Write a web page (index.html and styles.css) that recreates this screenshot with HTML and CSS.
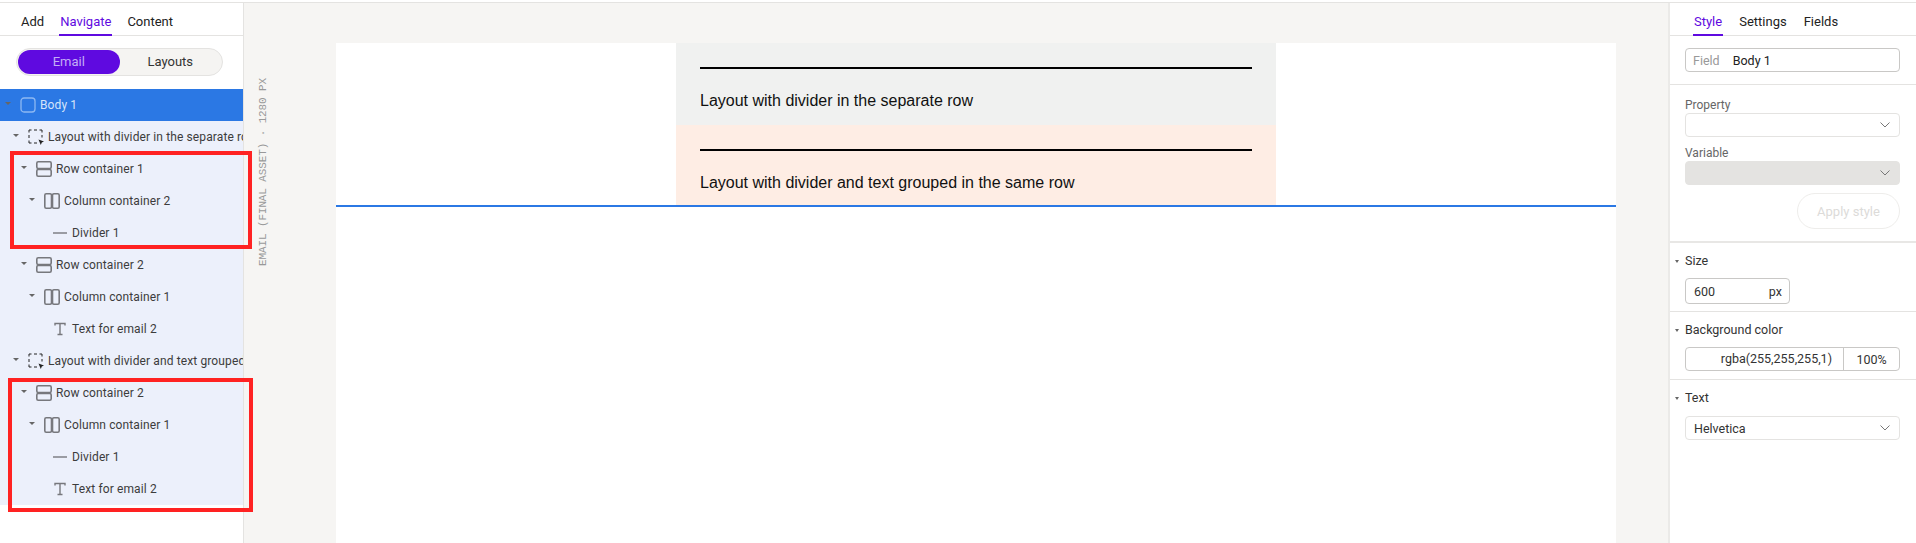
FILE: index.html
```html
<!DOCTYPE html>
<html>
<head>
    <link rel="stylesheet" href="styles.css">
</head>
<body>
    <svg class="defs">
        <symbol id="i-body" viewBox="0 0 16 16"><rect x="1" y="1" width="14" height="14" rx="3" fill="none" stroke="currentColor" stroke-width="1.3"/></symbol>
        <symbol id="i-layout" viewBox="0 0 16 16"><path d="M1 3.5V1h2.5M6 1h3M11.5 1H14v2.5M14 6v2.5M1 6v3M1 11.5V14h2.5M6 14h3" fill="none" stroke="currentColor" stroke-width="1"/><path d="M10.5 10.5l5.5 2-2.2 1-1 2.5z" fill="currentColor"/></symbol>
        <symbol id="i-row" viewBox="0 0 16 16"><rect x=".8" y=".8" width="14.4" height="6.7" rx="1.4" fill="none" stroke="currentColor" stroke-width="1.6"/><rect x=".8" y="8.5" width="14.4" height="6.7" rx="1.4" fill="none" stroke="currentColor" stroke-width="1.6"/></symbol>
        <symbol id="i-col" viewBox="0 0 16 16"><rect x=".8" y=".8" width="6.7" height="14.4" rx="1.4" fill="none" stroke="currentColor" stroke-width="1.6"/><rect x="8.5" y=".8" width="6.7" height="14.4" rx="1.4" fill="none" stroke="currentColor" stroke-width="1.6"/></symbol>
        <symbol id="i-divider" viewBox="0 0 16 16"><path d="M1 8h14" fill="none" stroke="currentColor" stroke-width="1.4"/></symbol>
        <symbol id="i-text" viewBox="0 0 16 16"><path d="M3 4.5V2.5h10v2M8 2.5v11M5.5 13.5h5" fill="none" stroke="currentColor" stroke-width="1.4"/></symbol>
        <symbol id="i-chevron" viewBox="0 0 10 6"><path d="M.5 .5L5 5l4.5-4.5" fill="none" stroke="currentColor" stroke-width="1"/></symbol>
    </svg>

    <div class="app">
        <div class="left-panel">
            <div class="tabs left-tabs">
                <span class="tab">Add</span>
                <span class="tab active">Navigate</span>
                <span class="tab">Content</span>
            </div>
            <div class="toggle-wrap">
                <div class="toggle">
                    <span class="toggle-item on">Email</span>
                    <span class="toggle-item">Layouts</span>
                </div>
            </div>
            <div class="tree">
                <div class="node selected depth-0"><i class="caret"></i><svg class="icon"><use href="#i-body"/></svg><span>Body 1</span></div>
                <div class="node depth-1"><i class="caret"></i><svg class="icon dark"><use href="#i-layout"/></svg><span>Layout with divider in the separate row</span></div>
                <div class="node depth-2"><i class="caret"></i><svg class="icon"><use href="#i-row"/></svg><span>Row container 1</span></div>
                <div class="node depth-3"><i class="caret"></i><svg class="icon"><use href="#i-col"/></svg><span>Column container 2</span></div>
                <div class="node depth-4"><i class="caret none"></i><svg class="icon"><use href="#i-divider"/></svg><span>Divider 1</span></div>
                <div class="node depth-2"><i class="caret"></i><svg class="icon"><use href="#i-row"/></svg><span>Row container 2</span></div>
                <div class="node depth-3"><i class="caret"></i><svg class="icon"><use href="#i-col"/></svg><span>Column container 1</span></div>
                <div class="node depth-4"><i class="caret none"></i><svg class="icon"><use href="#i-text"/></svg><span>Text for email 2</span></div>
                <div class="node depth-1"><i class="caret"></i><svg class="icon dark"><use href="#i-layout"/></svg><span>Layout with divider and text grouped in the same row</span></div>
                <div class="node depth-2"><i class="caret"></i><svg class="icon"><use href="#i-row"/></svg><span>Row container 2</span></div>
                <div class="node depth-3"><i class="caret"></i><svg class="icon"><use href="#i-col"/></svg><span>Column container 1</span></div>
                <div class="node depth-4"><i class="caret none"></i><svg class="icon"><use href="#i-divider"/></svg><span>Divider 1</span></div>
                <div class="node depth-4"><i class="caret none"></i><svg class="icon"><use href="#i-text"/></svg><span>Text for email 2</span></div>
            </div>
        </div>

        <div class="canvas">
            <div class="gutter"><span class="asset-label">EMAIL (FINAL ASSET) · 1280 PX</span></div>
            <div class="page">
                <div class="email">
                    <div class="email-row grey">
                        <div class="rule"></div>
                        <p>Layout with divider in the separate row</p>
                    </div>
                    <div class="email-row peach">
                        <div class="rule"></div>
                        <p>Layout with divider and text grouped in the same row</p>
                    </div>
                </div>
                <div class="fold"></div>
            </div>
        </div>

        <div class="right-panel">
            <div class="tabs right-tabs">
                <span class="tab active">Style</span>
                <span class="tab">Settings</span>
                <span class="tab">Fields</span>
            </div>
            <div class="field-wrap">
                <div class="box field"><span class="muted">Field</span><span>Body 1</span></div>
            </div>
            <div class="style-wrap">
                <label>Property</label>
                <div class="box select light"><svg class="chevron"><use href="#i-chevron"/></svg></div>
                <label>Variable</label>
                <div class="box select disabled"><svg class="chevron"><use href="#i-chevron"/></svg></div>
                <div class="apply-row"><button class="apply">Apply style</button></div>
            </div>
            <div class="section size-section">
                <div class="section-title"><i class="caret small"></i>Size</div>
                <div class="box size"><span>600</span><span>px</span></div>
            </div>
            <div class="section color-section">
                <div class="section-title"><i class="caret small"></i>Background color</div>
                <div class="box color"><span class="color-value">rgba(255,255,255,1)</span><span class="color-alpha">100%</span></div>
            </div>
            <div class="section text-section">
                <div class="section-title"><i class="caret small"></i>Text</div>
                <div class="box select light"><span>Helvetica</span><svg class="chevron"><use href="#i-chevron"/></svg></div>
            </div>
        </div>

        <div class="mark mark-one"></div>
        <div class="mark mark-two"></div>
    </div>
</body>
</html>
```

FILE: styles.css
```css
* {
    box-sizing: border-box;
}

body {
    margin: 0;
    height: 543px;
    padding-top: 2px;
    overflow: hidden;
    background: white;
    font-family: 'Roboto', 'Noto Sans', sans-serif;
    font-size: 12.5px;
    color: #333;
}

.defs {
    display: none;
}

.app {
    position: relative;
    display: flex;
    height: 541px;
    border-top: 1px solid #e4e3e1;
}

/* panels */
.left-panel {
    width: 244px;
    flex-shrink: 0;
    border-right: 1px solid #e4e3e1;
    background: white;
}

.right-panel {
    width: 248px;
    flex-shrink: 0;
    border-left: 2px solid #ebeae8;
    background: white;
}

.tabs {
    display: flex;
    height: 33px;
    border-bottom: 1px solid #e4e3e1;
    font-size: 13px;
}

.left-tabs {
    padding-left: 20px;
    gap: 14px;
}

.right-tabs {
    padding-left: 23px;
    gap: 15px;
}

.tab {
    height: 33px;
    padding: 0 1px;
    line-height: 37px;
    color: #222;
}

.tab.active {
    color: #5f0ae0;
    border-bottom: 2px solid #5f0ae0;
}

.toggle-wrap {
    height: 53px;
    padding: 12px 16px 0;
}

.toggle {
    display: flex;
    width: 207px;
    height: 28px;
    padding: 1px;
    border: 1px solid #e4e3e1;
    border-radius: 14px;
    background: #f5f4f2;
}

.toggle-item {
    flex: 1;
    text-align: center;
    font-size: 13px;
    line-height: 24px;
    border-radius: 12px;
    color: #333;
}

.toggle-item.on {
    background: #5f0ae0;
    color: #c4aef5;
}

/* tree */
.tree {
    background: #ecf0fb;
}

.node {
    display: flex;
    align-items: center;
    height: 32px;
    white-space: nowrap;
    overflow: hidden;
    font-size: 12px;
    letter-spacing: 0.12px;
    color: #3c3c3c;
}

.node.selected {
    background: #2b78e4;
    color: #d5e4fa;
}

.depth-0 { padding-left: 5px; }
.depth-1 { padding-left: 13px; }
.depth-2 { padding-left: 21px; }
.depth-3 { padding-left: 29px; }
.depth-4 { padding-left: 37px; }

.caret {
    flex-shrink: 0;
    width: 0;
    height: 0;
    margin-bottom: 3px;
    border-left: 3px solid transparent;
    border-right: 3px solid transparent;
    border-top: 3px solid #666;
}

.caret.none {
    border-top-color: transparent;
}

.caret.small {
    margin: 0;
    border-left-width: 2.5px;
    border-right-width: 2.5px;
}

.icon {
    flex-shrink: 0;
    width: 16px;
    height: 16px;
    margin: 0 4px 0 9px;
    color: #77787d;
}

.icon.dark {
    color: #222;
}

.selected .icon {
    color: #8db8f2;
}

/* canvas */
.canvas {
    flex: 1;
    display: flex;
    background: #f6f5f3;
}

.gutter {
    width: 92px;
    flex-shrink: 0;
    padding: 75px 0 0 13px;
}

.asset-label {
    display: block;
    writing-mode: vertical-rl;
    transform: rotate(180deg);
    font-family: 'Liberation Mono', monospace;
    font-size: 11px;
    letter-spacing: -0.12px;
    line-height: 12px;
    color: #999;
}

.page {
    width: 1280px;
    margin-top: 40px;
    background: white;
}

.email {
    width: 600px;
    margin-left: 340px;
    font-family: 'Liberation Sans', Arial, sans-serif;
    font-size: 16px;
    color: #111;
}

.email-row {
    padding: 24px 24px 12px;
}

.email-row.grey {
    background: #f0f1f0;
}

.email-row.peach {
    padding-bottom: 11px;
    background: #feede4;
}

.email-row p {
    margin: 20px 0 0;
    line-height: 24px;
}

.rule {
    height: 2px;
    background: black;
}

.fold {
    height: 2px;
    margin-top: -1px;
    background: #2b78e4;
}

/* right panel */
.box {
    display: flex;
    align-items: center;
    height: 24px;
    border: 1px solid #c9c8c6;
    border-radius: 4px;
}

.field-wrap {
    height: 49px;
    padding: 12px 16px 0 15px;
    border-bottom: 1px solid #e4e3e1;
}

.field {
    padding-left: 7px;
    gap: 13px;
    color: #222;
}

.muted {
    color: #999;
}

.style-wrap {
    height: 158px;
    padding: 12px 16px 0 15px;
    border-bottom: 2px solid #e8e7e5;
}

label {
    display: block;
    height: 16px;
    font-size: 12px;
    line-height: 16px;
    color: #666;
}

.box + label {
    margin-top: 8px;
}

.select {
    justify-content: space-between;
    padding: 0 9px 0 8px;
    color: #333;
}

.select.light {
    border-color: #e4e3e1;
}

.select.disabled {
    border-color: #e4e3e1;
    background: #e4e3e1;
}

.chevron {
    width: 10px;
    height: 6px;
    margin-left: auto;
    color: #777;
}

.apply-row {
    display: flex;
    justify-content: flex-end;
    margin-top: 8px;
}

.apply {
    width: 103px;
    height: 36px;
    padding: 0;
    border: 1px solid #eeedeb;
    border-radius: 18px;
    background: white;
    font-family: inherit;
    font-size: 13px;
    color: #dcdbd9;
}

.section {
    padding: 0 16px 0 15px;
    border-bottom: 1px solid #e4e3e1;
}

.section-title {
    display: flex;
    align-items: center;
    gap: 6px;
    height: 18px;
    margin-left: -10px;
    line-height: 18px;
    color: #333;
}

.size-section {
    height: 69px;
    padding-top: 9px;
}

.size-section .section-title {
    margin-bottom: 8px;
}

.size {
    justify-content: space-between;
    width: 105px;
    height: 26px;
    padding: 0 7px 0 8px;
    color: #333;
}

.color-section {
    height: 68px;
    padding-top: 9px;
}

.color-section .section-title {
    margin-bottom: 8px;
}

.color-value {
    width: 158px;
    height: 22px;
    padding-right: 11px;
    border-right: 1px solid #c9c8c6;
    text-align: right;
    line-height: 22px;
}

.color-alpha {
    flex: 1;
    text-align: center;
}

.text-section {
    padding-top: 9px;
    border-bottom: none;
}

.text-section .section-title {
    margin-bottom: 9px;
}

/* annotation boxes on top of the tree */
.mark {
    position: absolute;
    border: 4px solid #ff2222;
}

.mark-one {
    left: 10px;
    top: 148px;
    width: 242px;
    height: 98px;
}

.mark-two {
    left: 8px;
    top: 375px;
    width: 245px;
    height: 134px;
}
```
